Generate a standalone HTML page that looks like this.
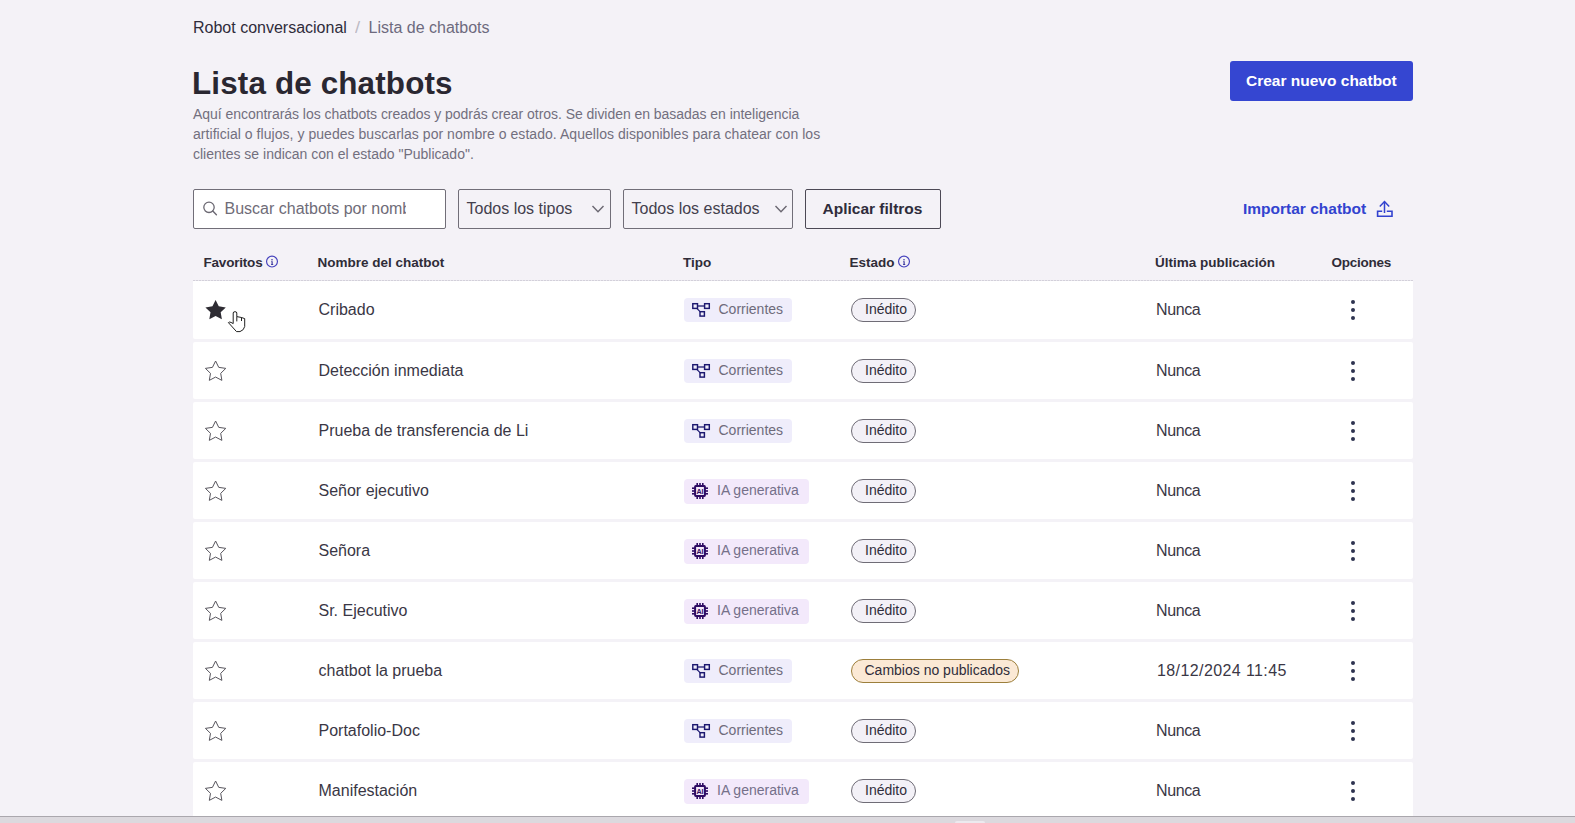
<!DOCTYPE html>
<html><head><meta charset="utf-8"><title>Lista de chatbots</title>
<style>
html,body{margin:0;padding:0;}
body{width:1575px;height:823px;overflow:hidden;background:#f4f2f7;position:relative;font-family:"Liberation Sans",sans-serif;}
.t{position:absolute;white-space:nowrap;line-height:40px;height:40px;}
.box{position:absolute;box-sizing:content-box;}
.ic{position:absolute;overflow:visible;}
</style></head><body>
<div class="t" style="left:193px;top:8px;font-size:16px;font-weight:400;color:#2f2c3b;">Robot conversacional</div>
<div class="t" style="left:354.5px;top:8px;font-size:16px;font-weight:400;color:#bdbac4;transform:scaleX(1.15);transform-origin:left">/</div>
<div class="t" style="left:368.5px;top:8px;font-size:16px;font-weight:400;color:#6d6a7e;">Lista de chatbots</div>
<div class="t" style="left:192px;top:64px;font-size:31.4px;font-weight:700;color:#2a2731;letter-spacing:0.15px">Lista de chatbots</div>
<div class="t" style="left:193px;top:94px;font-size:14px;font-weight:400;color:#726f7e;letter-spacing:-0.04px">Aquí encontrarás los chatbots creados y podrás crear otros. Se dividen en basadas en inteligencia</div>
<div class="t" style="left:193px;top:114px;font-size:14px;font-weight:400;color:#726f7e;letter-spacing:0.045px">artificial o flujos, y puedes buscarlas por nombre o estado. Aquellos disponibles para chatear con los</div>
<div class="t" style="left:193px;top:134px;font-size:14px;font-weight:400;color:#726f7e;letter-spacing:0">clientes se indican con el estado "Publicado".</div>
<div class="box" style="left:1230px;top:61px;width:183px;height:40px;background:#3546d1;border-radius:3px"></div>
<div class="t" style="left:1246px;top:61px;font-size:15.5px;font-weight:700;color:#ffffff;">Crear nuevo chatbot</div>
<div class="box" style="left:193px;top:189px;width:251px;height:38px;background:#fff;border:1px solid #716e78;border-radius:2px"></div>
<svg class="ic" style="left:200px;top:198px" width="20" height="20" viewBox="0 0 20 20"><circle cx="9" cy="9.3" r="5.2" fill="none" stroke="#6b6872" stroke-width="1.3"/><line x1="12.8" y1="13.1" x2="16.4" y2="16.7" stroke="#6b6872" stroke-width="1.4" stroke-linecap="round"/></svg>
<div class="t" style="left:224.5px;top:189px;width:181px;overflow:hidden;font-size:16px;color:#6f6c78">Buscar chatbots por nombre</div>
<div class="box" style="left:458px;top:189px;width:151px;height:38px;border:1px solid #716e78;border-radius:2px"></div>
<div class="t" style="left:466.5px;top:189px;font-size:16px;font-weight:400;color:#43404d;">Todos los tipos</div>
<svg class="ic" style="left:590.5px;top:204px" width="14" height="10" viewBox="0 0 14 10"><polyline points="1.5,2 7,7.8 12.5,2" fill="none" stroke="#6b6872" stroke-width="1.4"/></svg>
<div class="box" style="left:623px;top:189px;width:168px;height:38px;border:1px solid #716e78;border-radius:2px"></div>
<div class="t" style="left:631.5px;top:189px;font-size:16px;font-weight:400;color:#43404d;">Todos los estados</div>
<svg class="ic" style="left:773.5px;top:204px" width="14" height="10" viewBox="0 0 14 10"><polyline points="1.5,2 7,7.8 12.5,2" fill="none" stroke="#6b6872" stroke-width="1.4"/></svg>
<div class="box" style="left:805px;top:189px;width:134px;height:38px;border:1px solid #4c4955;border-radius:2px"></div>
<div class="t" style="left:822.5px;top:189px;font-size:15.5px;font-weight:700;color:#2f2c3b;">Aplicar filtros</div>
<div class="t" style="left:1243px;top:189px;font-size:15.5px;font-weight:700;color:#3243cf;">Importar chatbot</div>
<svg class="ic" style="left:1375px;top:199px" width="20" height="20" viewBox="0 0 20 20"><polyline points="4.8,7.6 9.5,2.6 14.2,7.6" fill="none" stroke="#3243cf" stroke-width="1.5"/><line x1="9.5" y1="2.8" x2="9.5" y2="14" stroke="#3243cf" stroke-width="1.5"/><polyline points="7.2,12.2 2.6,12.2 2.6,17.2 17,17.2 17,12.2 11.8,12.2" fill="none" stroke="#3243cf" stroke-width="1.6"/></svg>
<div class="t" style="left:203.5px;top:243px;font-size:13.5px;font-weight:700;color:#2f2c38;letter-spacing:-0.2px">Favoritos</div>
<svg class="ic" style="left:265.4px;top:254.5px" width="14" height="14" viewBox="0 0 14 14"><circle cx="7" cy="6.6" r="5.45" fill="none" stroke="#4542bd" stroke-width="1.15"/><circle cx="7" cy="4.7" r="0.8" fill="#3d3a9e"/><path d="M6.1 6.2 H7.7 V8.9 H8.2 V9.9 H6.1 V8.9 H6.5 V7.1 H6.1 Z" fill="#3d3a9e"/></svg>
<div class="t" style="left:317.5px;top:243px;font-size:13.5px;font-weight:700;color:#2f2c38;">Nombre del chatbot</div>
<div class="t" style="left:683px;top:243px;font-size:13.5px;font-weight:700;color:#2f2c38;">Tipo</div>
<div class="t" style="left:849.5px;top:243px;font-size:13.5px;font-weight:700;color:#2f2c38;">Estado</div>
<svg class="ic" style="left:897.4px;top:254.5px" width="14" height="14" viewBox="0 0 14 14"><circle cx="7" cy="6.6" r="5.45" fill="none" stroke="#4542bd" stroke-width="1.15"/><circle cx="7" cy="4.7" r="0.8" fill="#3d3a9e"/><path d="M6.1 6.2 H7.7 V8.9 H8.2 V9.9 H6.1 V8.9 H6.5 V7.1 H6.1 Z" fill="#3d3a9e"/></svg>
<div class="t" style="left:1155px;top:243px;font-size:13.5px;font-weight:700;color:#2f2c38;">Última publicación</div>
<div class="t" style="left:1331.5px;top:243px;font-size:13.5px;font-weight:700;color:#2f2c38;letter-spacing:-0.25px">Opciones</div>
<div class="box" style="left:193px;top:280px;width:1220px;height:1px;background:repeating-linear-gradient(90deg,#d3d0da 0 2px,#e8e6ed 2px 3px)"></div>
<div class="box" style="left:193px;top:281px;width:1220px;height:58px;background:#fff;border-radius:0 0 2px 2px"></div>
<svg class="ic" style="left:205px;top:299px" width="21" height="22" viewBox="0 0 21 22"><path d="M10.60,1.00 L13.74,7.37 L20.78,8.39 L15.69,13.35 L16.89,20.36 L10.60,17.05 L4.31,20.36 L5.51,13.35 L0.42,8.39 L7.46,7.37 Z" fill="#2e2c33"/></svg>
<svg class="ic" style="left:226px;top:309px" width="22" height="26" viewBox="0 0 22 26"><path d="M7.2 14.6 L7.2 4 Q7.2 2.7 9 2.7 Q10.8 2.7 10.8 4 L10.8 7.6 L15.5 8.5 L18.7 9.6 L18.7 17.5 Q18 21.2 14 22.6 L10.5 22.6 L2.4 13.6 Q3 12.6 5 13.4 L7.2 14.6 Z" fill="#fff" stroke="#151515" stroke-width="0.95" stroke-linejoin="round"/><path d="M10.8 7.6 L10.8 12.4 M15.5 8.5 L15.5 12" fill="none" stroke="#151515" stroke-width="0.95"/></svg>
<div class="t" style="left:318.5px;top:290px;font-size:16px;font-weight:400;color:#3a3745;">Cribado</div>
<div class="box" style="left:684px;top:298px;width:107.5px;height:24px;background:#efedfb;border-radius:4px"></div>
<svg class="ic" style="left:691px;top:302px" width="20" height="16" viewBox="0 0 20 16"><rect x="1.8" y="1.7" width="4.7" height="4.7" fill="none" stroke="#1c1870" stroke-width="1.45"/><rect x="13.6" y="1.7" width="4.7" height="4.7" fill="none" stroke="#1c1870" stroke-width="1.45"/><rect x="9" y="9.7" width="4.4" height="4.4" fill="none" stroke="#1c1870" stroke-width="1.45"/><line x1="6.5" y1="4" x2="13.6" y2="4" stroke="#1c1870" stroke-width="1.3"/><line x1="5.8" y1="6.4" x2="9.6" y2="10.2" stroke="#1c1870" stroke-width="1.2"/></svg>
<div class="t" style="left:718.5px;top:289px;font-size:14px;font-weight:400;color:#6e6b7c;">Corrientes</div>
<div class="box" style="left:851px;top:298px;width:63px;height:22px;background:#f3f1f7;border:1px solid #6f6c76;border-radius:12px"></div>
<div class="t" style="left:865px;top:289px;font-size:14px;font-weight:400;color:#302d3a;">Inédito</div>
<div class="t" style="left:1156px;top:290px;font-size:16px;font-weight:400;color:#3a3745;letter-spacing:-0.4px">Nunca</div>
<div class="box" style="left:1350.5px;top:300.0px;width:4px;height:4px;border-radius:50%;background:#2e3350"></div>
<div class="box" style="left:1350.5px;top:308.1px;width:4px;height:4px;border-radius:50%;background:#2e3350"></div>
<div class="box" style="left:1350.5px;top:316.2px;width:4px;height:4px;border-radius:50%;background:#2e3350"></div>
<div class="box" style="left:193px;top:342px;width:1220px;height:57px;background:#fff;border-radius:2px"></div>
<svg class="ic" style="left:205px;top:360px" width="21" height="22" viewBox="0 0 21 22"><path d="M10.60,1.00 L13.74,7.37 L20.78,8.39 L15.69,13.35 L16.89,20.36 L10.60,17.05 L4.31,20.36 L5.51,13.35 L0.42,8.39 L7.46,7.37 Z" fill="none" stroke="#57555d" stroke-width="1" stroke-linejoin="miter"/></svg>
<div class="t" style="left:318.5px;top:351px;font-size:16px;font-weight:400;color:#3a3745;">Detección inmediata</div>
<div class="box" style="left:684px;top:359px;width:107.5px;height:24px;background:#efedfb;border-radius:4px"></div>
<svg class="ic" style="left:691px;top:363px" width="20" height="16" viewBox="0 0 20 16"><rect x="1.8" y="1.7" width="4.7" height="4.7" fill="none" stroke="#1c1870" stroke-width="1.45"/><rect x="13.6" y="1.7" width="4.7" height="4.7" fill="none" stroke="#1c1870" stroke-width="1.45"/><rect x="9" y="9.7" width="4.4" height="4.4" fill="none" stroke="#1c1870" stroke-width="1.45"/><line x1="6.5" y1="4" x2="13.6" y2="4" stroke="#1c1870" stroke-width="1.3"/><line x1="5.8" y1="6.4" x2="9.6" y2="10.2" stroke="#1c1870" stroke-width="1.2"/></svg>
<div class="t" style="left:718.5px;top:350px;font-size:14px;font-weight:400;color:#6e6b7c;">Corrientes</div>
<div class="box" style="left:851px;top:359px;width:63px;height:22px;background:#f3f1f7;border:1px solid #6f6c76;border-radius:12px"></div>
<div class="t" style="left:865px;top:350px;font-size:14px;font-weight:400;color:#302d3a;">Inédito</div>
<div class="t" style="left:1156px;top:351px;font-size:16px;font-weight:400;color:#3a3745;letter-spacing:-0.4px">Nunca</div>
<div class="box" style="left:1350.5px;top:361.0px;width:4px;height:4px;border-radius:50%;background:#2e3350"></div>
<div class="box" style="left:1350.5px;top:369.1px;width:4px;height:4px;border-radius:50%;background:#2e3350"></div>
<div class="box" style="left:1350.5px;top:377.2px;width:4px;height:4px;border-radius:50%;background:#2e3350"></div>
<div class="box" style="left:193px;top:402px;width:1220px;height:57px;background:#fff;border-radius:2px"></div>
<svg class="ic" style="left:205px;top:420px" width="21" height="22" viewBox="0 0 21 22"><path d="M10.60,1.00 L13.74,7.37 L20.78,8.39 L15.69,13.35 L16.89,20.36 L10.60,17.05 L4.31,20.36 L5.51,13.35 L0.42,8.39 L7.46,7.37 Z" fill="none" stroke="#57555d" stroke-width="1" stroke-linejoin="miter"/></svg>
<div class="t" style="left:318.5px;top:411px;font-size:16px;font-weight:400;color:#3a3745;">Prueba de transferencia de Li</div>
<div class="box" style="left:684px;top:419px;width:107.5px;height:24px;background:#efedfb;border-radius:4px"></div>
<svg class="ic" style="left:691px;top:423px" width="20" height="16" viewBox="0 0 20 16"><rect x="1.8" y="1.7" width="4.7" height="4.7" fill="none" stroke="#1c1870" stroke-width="1.45"/><rect x="13.6" y="1.7" width="4.7" height="4.7" fill="none" stroke="#1c1870" stroke-width="1.45"/><rect x="9" y="9.7" width="4.4" height="4.4" fill="none" stroke="#1c1870" stroke-width="1.45"/><line x1="6.5" y1="4" x2="13.6" y2="4" stroke="#1c1870" stroke-width="1.3"/><line x1="5.8" y1="6.4" x2="9.6" y2="10.2" stroke="#1c1870" stroke-width="1.2"/></svg>
<div class="t" style="left:718.5px;top:410px;font-size:14px;font-weight:400;color:#6e6b7c;">Corrientes</div>
<div class="box" style="left:851px;top:419px;width:63px;height:22px;background:#f3f1f7;border:1px solid #6f6c76;border-radius:12px"></div>
<div class="t" style="left:865px;top:410px;font-size:14px;font-weight:400;color:#302d3a;">Inédito</div>
<div class="t" style="left:1156px;top:411px;font-size:16px;font-weight:400;color:#3a3745;letter-spacing:-0.4px">Nunca</div>
<div class="box" style="left:1350.5px;top:421.0px;width:4px;height:4px;border-radius:50%;background:#2e3350"></div>
<div class="box" style="left:1350.5px;top:429.1px;width:4px;height:4px;border-radius:50%;background:#2e3350"></div>
<div class="box" style="left:1350.5px;top:437.2px;width:4px;height:4px;border-radius:50%;background:#2e3350"></div>
<div class="box" style="left:193px;top:462px;width:1220px;height:57px;background:#fff;border-radius:2px"></div>
<svg class="ic" style="left:205px;top:480px" width="21" height="22" viewBox="0 0 21 22"><path d="M10.60,1.00 L13.74,7.37 L20.78,8.39 L15.69,13.35 L16.89,20.36 L10.60,17.05 L4.31,20.36 L5.51,13.35 L0.42,8.39 L7.46,7.37 Z" fill="none" stroke="#57555d" stroke-width="1" stroke-linejoin="miter"/></svg>
<div class="t" style="left:318.5px;top:471px;font-size:16px;font-weight:400;color:#3a3745;">Señor ejecutivo</div>
<div class="box" style="left:684px;top:479px;width:124.5px;height:24.5px;background:#f3e9fb;border-radius:4px"></div>
<svg class="ic" style="left:691px;top:481.5px" width="18" height="18" viewBox="0 0 18 18"><rect x="4.1" y="4.1" width="9.8" height="9.8" rx="0.6" fill="none" stroke="#2f0c64" stroke-width="2"/><g stroke="#2f0c64" stroke-width="1.6"><line x1="6.2" y1="1" x2="6.2" y2="4"/><line x1="9" y1="1" x2="9" y2="4"/><line x1="11.8" y1="1" x2="11.8" y2="4"/><line x1="6.2" y1="14" x2="6.2" y2="17"/><line x1="9" y1="14" x2="9" y2="17"/><line x1="11.8" y1="14" x2="11.8" y2="17"/><line x1="1" y1="6.2" x2="4" y2="6.2"/><line x1="1" y1="9" x2="4" y2="9"/><line x1="1" y1="11.8" x2="4" y2="11.8"/><line x1="14" y1="6.2" x2="17" y2="6.2"/><line x1="14" y1="9" x2="17" y2="9"/><line x1="14" y1="11.8" x2="17" y2="11.8"/></g><text x="9" y="11.8" text-anchor="middle" font-family="Liberation Sans" font-weight="700" font-size="7.2" fill="#2f0c64">AI</text></svg>
<div class="t" style="left:717px;top:470px;font-size:14px;font-weight:400;color:#75708a;">IA generativa</div>
<div class="box" style="left:851px;top:479px;width:63px;height:22px;background:#f3f1f7;border:1px solid #6f6c76;border-radius:12px"></div>
<div class="t" style="left:865px;top:470px;font-size:14px;font-weight:400;color:#302d3a;">Inédito</div>
<div class="t" style="left:1156px;top:471px;font-size:16px;font-weight:400;color:#3a3745;letter-spacing:-0.4px">Nunca</div>
<div class="box" style="left:1350.5px;top:481.0px;width:4px;height:4px;border-radius:50%;background:#2e3350"></div>
<div class="box" style="left:1350.5px;top:489.1px;width:4px;height:4px;border-radius:50%;background:#2e3350"></div>
<div class="box" style="left:1350.5px;top:497.2px;width:4px;height:4px;border-radius:50%;background:#2e3350"></div>
<div class="box" style="left:193px;top:522px;width:1220px;height:57px;background:#fff;border-radius:2px"></div>
<svg class="ic" style="left:205px;top:540px" width="21" height="22" viewBox="0 0 21 22"><path d="M10.60,1.00 L13.74,7.37 L20.78,8.39 L15.69,13.35 L16.89,20.36 L10.60,17.05 L4.31,20.36 L5.51,13.35 L0.42,8.39 L7.46,7.37 Z" fill="none" stroke="#57555d" stroke-width="1" stroke-linejoin="miter"/></svg>
<div class="t" style="left:318.5px;top:531px;font-size:16px;font-weight:400;color:#3a3745;">Señora</div>
<div class="box" style="left:684px;top:539px;width:124.5px;height:24.5px;background:#f3e9fb;border-radius:4px"></div>
<svg class="ic" style="left:691px;top:541.5px" width="18" height="18" viewBox="0 0 18 18"><rect x="4.1" y="4.1" width="9.8" height="9.8" rx="0.6" fill="none" stroke="#2f0c64" stroke-width="2"/><g stroke="#2f0c64" stroke-width="1.6"><line x1="6.2" y1="1" x2="6.2" y2="4"/><line x1="9" y1="1" x2="9" y2="4"/><line x1="11.8" y1="1" x2="11.8" y2="4"/><line x1="6.2" y1="14" x2="6.2" y2="17"/><line x1="9" y1="14" x2="9" y2="17"/><line x1="11.8" y1="14" x2="11.8" y2="17"/><line x1="1" y1="6.2" x2="4" y2="6.2"/><line x1="1" y1="9" x2="4" y2="9"/><line x1="1" y1="11.8" x2="4" y2="11.8"/><line x1="14" y1="6.2" x2="17" y2="6.2"/><line x1="14" y1="9" x2="17" y2="9"/><line x1="14" y1="11.8" x2="17" y2="11.8"/></g><text x="9" y="11.8" text-anchor="middle" font-family="Liberation Sans" font-weight="700" font-size="7.2" fill="#2f0c64">AI</text></svg>
<div class="t" style="left:717px;top:530px;font-size:14px;font-weight:400;color:#75708a;">IA generativa</div>
<div class="box" style="left:851px;top:539px;width:63px;height:22px;background:#f3f1f7;border:1px solid #6f6c76;border-radius:12px"></div>
<div class="t" style="left:865px;top:530px;font-size:14px;font-weight:400;color:#302d3a;">Inédito</div>
<div class="t" style="left:1156px;top:531px;font-size:16px;font-weight:400;color:#3a3745;letter-spacing:-0.4px">Nunca</div>
<div class="box" style="left:1350.5px;top:541.0px;width:4px;height:4px;border-radius:50%;background:#2e3350"></div>
<div class="box" style="left:1350.5px;top:549.1px;width:4px;height:4px;border-radius:50%;background:#2e3350"></div>
<div class="box" style="left:1350.5px;top:557.2px;width:4px;height:4px;border-radius:50%;background:#2e3350"></div>
<div class="box" style="left:193px;top:582px;width:1220px;height:57px;background:#fff;border-radius:2px"></div>
<svg class="ic" style="left:205px;top:600px" width="21" height="22" viewBox="0 0 21 22"><path d="M10.60,1.00 L13.74,7.37 L20.78,8.39 L15.69,13.35 L16.89,20.36 L10.60,17.05 L4.31,20.36 L5.51,13.35 L0.42,8.39 L7.46,7.37 Z" fill="none" stroke="#57555d" stroke-width="1" stroke-linejoin="miter"/></svg>
<div class="t" style="left:318.5px;top:591px;font-size:16px;font-weight:400;color:#3a3745;">Sr. Ejecutivo</div>
<div class="box" style="left:684px;top:599px;width:124.5px;height:24.5px;background:#f3e9fb;border-radius:4px"></div>
<svg class="ic" style="left:691px;top:601.5px" width="18" height="18" viewBox="0 0 18 18"><rect x="4.1" y="4.1" width="9.8" height="9.8" rx="0.6" fill="none" stroke="#2f0c64" stroke-width="2"/><g stroke="#2f0c64" stroke-width="1.6"><line x1="6.2" y1="1" x2="6.2" y2="4"/><line x1="9" y1="1" x2="9" y2="4"/><line x1="11.8" y1="1" x2="11.8" y2="4"/><line x1="6.2" y1="14" x2="6.2" y2="17"/><line x1="9" y1="14" x2="9" y2="17"/><line x1="11.8" y1="14" x2="11.8" y2="17"/><line x1="1" y1="6.2" x2="4" y2="6.2"/><line x1="1" y1="9" x2="4" y2="9"/><line x1="1" y1="11.8" x2="4" y2="11.8"/><line x1="14" y1="6.2" x2="17" y2="6.2"/><line x1="14" y1="9" x2="17" y2="9"/><line x1="14" y1="11.8" x2="17" y2="11.8"/></g><text x="9" y="11.8" text-anchor="middle" font-family="Liberation Sans" font-weight="700" font-size="7.2" fill="#2f0c64">AI</text></svg>
<div class="t" style="left:717px;top:590px;font-size:14px;font-weight:400;color:#75708a;">IA generativa</div>
<div class="box" style="left:851px;top:599px;width:63px;height:22px;background:#f3f1f7;border:1px solid #6f6c76;border-radius:12px"></div>
<div class="t" style="left:865px;top:590px;font-size:14px;font-weight:400;color:#302d3a;">Inédito</div>
<div class="t" style="left:1156px;top:591px;font-size:16px;font-weight:400;color:#3a3745;letter-spacing:-0.4px">Nunca</div>
<div class="box" style="left:1350.5px;top:601.0px;width:4px;height:4px;border-radius:50%;background:#2e3350"></div>
<div class="box" style="left:1350.5px;top:609.1px;width:4px;height:4px;border-radius:50%;background:#2e3350"></div>
<div class="box" style="left:1350.5px;top:617.2px;width:4px;height:4px;border-radius:50%;background:#2e3350"></div>
<div class="box" style="left:193px;top:642px;width:1220px;height:57px;background:#fff;border-radius:2px"></div>
<svg class="ic" style="left:205px;top:660px" width="21" height="22" viewBox="0 0 21 22"><path d="M10.60,1.00 L13.74,7.37 L20.78,8.39 L15.69,13.35 L16.89,20.36 L10.60,17.05 L4.31,20.36 L5.51,13.35 L0.42,8.39 L7.46,7.37 Z" fill="none" stroke="#57555d" stroke-width="1" stroke-linejoin="miter"/></svg>
<div class="t" style="left:318.5px;top:651px;font-size:16px;font-weight:400;color:#3a3745;">chatbot la prueba</div>
<div class="box" style="left:684px;top:659px;width:107.5px;height:24px;background:#efedfb;border-radius:4px"></div>
<svg class="ic" style="left:691px;top:663px" width="20" height="16" viewBox="0 0 20 16"><rect x="1.8" y="1.7" width="4.7" height="4.7" fill="none" stroke="#1c1870" stroke-width="1.45"/><rect x="13.6" y="1.7" width="4.7" height="4.7" fill="none" stroke="#1c1870" stroke-width="1.45"/><rect x="9" y="9.7" width="4.4" height="4.4" fill="none" stroke="#1c1870" stroke-width="1.45"/><line x1="6.5" y1="4" x2="13.6" y2="4" stroke="#1c1870" stroke-width="1.3"/><line x1="5.8" y1="6.4" x2="9.6" y2="10.2" stroke="#1c1870" stroke-width="1.2"/></svg>
<div class="t" style="left:718.5px;top:650px;font-size:14px;font-weight:400;color:#6e6b7c;">Corrientes</div>
<div class="box" style="left:851px;top:659px;width:166px;height:22px;background:#fbe9d5;border:1px solid #9c7f3c;border-radius:12px"></div>
<div class="t" style="left:864.5px;top:650px;font-size:14px;font-weight:400;color:#302d3a;">Cambios no publicados</div>
<div class="t" style="left:1157px;top:651px;font-size:16px;font-weight:400;color:#3a3745;letter-spacing:0.4px">18/12/2024 11:45</div>
<div class="box" style="left:1350.5px;top:661.0px;width:4px;height:4px;border-radius:50%;background:#2e3350"></div>
<div class="box" style="left:1350.5px;top:669.1px;width:4px;height:4px;border-radius:50%;background:#2e3350"></div>
<div class="box" style="left:1350.5px;top:677.2px;width:4px;height:4px;border-radius:50%;background:#2e3350"></div>
<div class="box" style="left:193px;top:702px;width:1220px;height:57px;background:#fff;border-radius:2px"></div>
<svg class="ic" style="left:205px;top:720px" width="21" height="22" viewBox="0 0 21 22"><path d="M10.60,1.00 L13.74,7.37 L20.78,8.39 L15.69,13.35 L16.89,20.36 L10.60,17.05 L4.31,20.36 L5.51,13.35 L0.42,8.39 L7.46,7.37 Z" fill="none" stroke="#57555d" stroke-width="1" stroke-linejoin="miter"/></svg>
<div class="t" style="left:318.5px;top:711px;font-size:16px;font-weight:400;color:#3a3745;">Portafolio-Doc</div>
<div class="box" style="left:684px;top:719px;width:107.5px;height:24px;background:#efedfb;border-radius:4px"></div>
<svg class="ic" style="left:691px;top:723px" width="20" height="16" viewBox="0 0 20 16"><rect x="1.8" y="1.7" width="4.7" height="4.7" fill="none" stroke="#1c1870" stroke-width="1.45"/><rect x="13.6" y="1.7" width="4.7" height="4.7" fill="none" stroke="#1c1870" stroke-width="1.45"/><rect x="9" y="9.7" width="4.4" height="4.4" fill="none" stroke="#1c1870" stroke-width="1.45"/><line x1="6.5" y1="4" x2="13.6" y2="4" stroke="#1c1870" stroke-width="1.3"/><line x1="5.8" y1="6.4" x2="9.6" y2="10.2" stroke="#1c1870" stroke-width="1.2"/></svg>
<div class="t" style="left:718.5px;top:710px;font-size:14px;font-weight:400;color:#6e6b7c;">Corrientes</div>
<div class="box" style="left:851px;top:719px;width:63px;height:22px;background:#f3f1f7;border:1px solid #6f6c76;border-radius:12px"></div>
<div class="t" style="left:865px;top:710px;font-size:14px;font-weight:400;color:#302d3a;">Inédito</div>
<div class="t" style="left:1156px;top:711px;font-size:16px;font-weight:400;color:#3a3745;letter-spacing:-0.4px">Nunca</div>
<div class="box" style="left:1350.5px;top:721.0px;width:4px;height:4px;border-radius:50%;background:#2e3350"></div>
<div class="box" style="left:1350.5px;top:729.1px;width:4px;height:4px;border-radius:50%;background:#2e3350"></div>
<div class="box" style="left:1350.5px;top:737.2px;width:4px;height:4px;border-radius:50%;background:#2e3350"></div>
<div class="box" style="left:193px;top:762px;width:1220px;height:57px;background:#fff;border-radius:2px"></div>
<svg class="ic" style="left:205px;top:780px" width="21" height="22" viewBox="0 0 21 22"><path d="M10.60,1.00 L13.74,7.37 L20.78,8.39 L15.69,13.35 L16.89,20.36 L10.60,17.05 L4.31,20.36 L5.51,13.35 L0.42,8.39 L7.46,7.37 Z" fill="none" stroke="#57555d" stroke-width="1" stroke-linejoin="miter"/></svg>
<div class="t" style="left:318.5px;top:771px;font-size:16px;font-weight:400;color:#3a3745;">Manifestación</div>
<div class="box" style="left:684px;top:779px;width:124.5px;height:24.5px;background:#f3e9fb;border-radius:4px"></div>
<svg class="ic" style="left:691px;top:781.5px" width="18" height="18" viewBox="0 0 18 18"><rect x="4.1" y="4.1" width="9.8" height="9.8" rx="0.6" fill="none" stroke="#2f0c64" stroke-width="2"/><g stroke="#2f0c64" stroke-width="1.6"><line x1="6.2" y1="1" x2="6.2" y2="4"/><line x1="9" y1="1" x2="9" y2="4"/><line x1="11.8" y1="1" x2="11.8" y2="4"/><line x1="6.2" y1="14" x2="6.2" y2="17"/><line x1="9" y1="14" x2="9" y2="17"/><line x1="11.8" y1="14" x2="11.8" y2="17"/><line x1="1" y1="6.2" x2="4" y2="6.2"/><line x1="1" y1="9" x2="4" y2="9"/><line x1="1" y1="11.8" x2="4" y2="11.8"/><line x1="14" y1="6.2" x2="17" y2="6.2"/><line x1="14" y1="9" x2="17" y2="9"/><line x1="14" y1="11.8" x2="17" y2="11.8"/></g><text x="9" y="11.8" text-anchor="middle" font-family="Liberation Sans" font-weight="700" font-size="7.2" fill="#2f0c64">AI</text></svg>
<div class="t" style="left:717px;top:770px;font-size:14px;font-weight:400;color:#75708a;">IA generativa</div>
<div class="box" style="left:851px;top:779px;width:63px;height:22px;background:#f3f1f7;border:1px solid #6f6c76;border-radius:12px"></div>
<div class="t" style="left:865px;top:770px;font-size:14px;font-weight:400;color:#302d3a;">Inédito</div>
<div class="t" style="left:1156px;top:771px;font-size:16px;font-weight:400;color:#3a3745;letter-spacing:-0.4px">Nunca</div>
<div class="box" style="left:1350.5px;top:781.0px;width:4px;height:4px;border-radius:50%;background:#2e3350"></div>
<div class="box" style="left:1350.5px;top:789.1px;width:4px;height:4px;border-radius:50%;background:#2e3350"></div>
<div class="box" style="left:1350.5px;top:797.2px;width:4px;height:4px;border-radius:50%;background:#2e3350"></div>
<div class="box" style="left:0;top:816px;width:1575px;height:7px;background:#dcd9de;border-top:1px solid #aaa7ad"></div>
<div class="box" style="left:955px;top:821px;width:30px;height:2px;background:#eceaef;border-radius:2px 2px 0 0"></div>
</body></html>
